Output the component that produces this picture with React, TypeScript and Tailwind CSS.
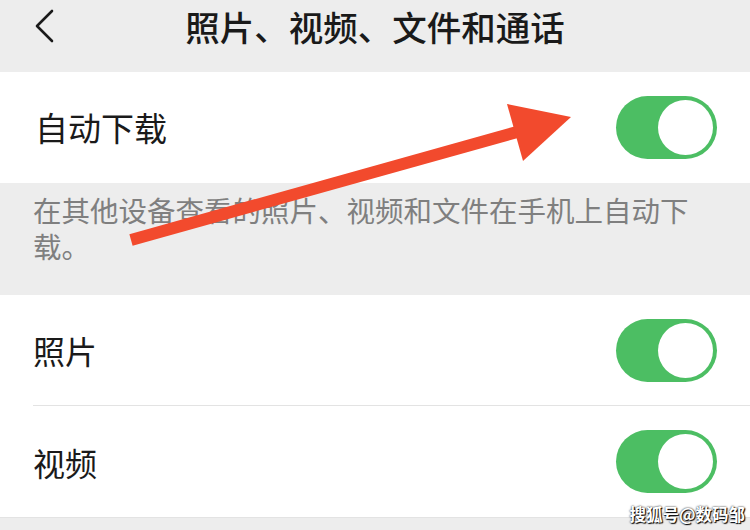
import React from "react";

function Toggle() {
  return (
    <div className="relative w-[101px] h-[63px] rounded-full bg-[#4cbe63] shrink-0">
      <div className="absolute right-[4px] top-[4px] w-[55px] h-[55px] rounded-full bg-white" />
    </div>
  );
}

export default function App() {
  const font = { fontFamily: '"Noto Sans CJK SC", "Noto Sans", sans-serif' };
  return (
    <div
      className="relative w-[750px] h-[530px] overflow-hidden bg-[#ededed] flex flex-col"
      style={font}
    >
      {/* Header */}
      <div className="h-[72px] flex items-start shrink-0">
        <div className="w-[110px] pl-[33px] pt-[9px]">
          <svg width="22" height="34" viewBox="0 0 22 34" fill="none">
            <path d="M19 2 L4 17 L19 32" stroke="#1a1a1a" strokeWidth="2.6" strokeLinecap="round" strokeLinejoin="round" />
          </svg>
        </div>
        <div className="flex-1 text-center text-[34.5px] leading-[40px] pt-[6px] font-medium text-[#1a1a1a]">
          照片、视频、文件和通话
        </div>
        <div className="w-[110px]" />
      </div>

      {/* Auto download */}
      <div className="h-[111px] bg-white flex items-center justify-between pl-[35px] pr-[33px] shrink-0">
        <span className="text-[33px] text-[#1a1a1a]">自动下载</span>
        <Toggle />
      </div>

      {/* Description */}
      <div className="h-[112px] px-[33px] pt-[9px] text-[28.5px] leading-[36px] text-[#7f7f7f] shrink-0">
        在其他设备查看的照片、视频和文件在手机上自动下载。
      </div>

      {/* Photos / Videos */}
      <div className="bg-white shrink-0">
        <div className="h-[110px] flex items-center justify-between pl-[33px] pr-[33px]">
          <span className="text-[32px] text-[#1a1a1a]">照片</span>
          <Toggle />
        </div>
        <div className="ml-[33px] h-px bg-[#e3e3e3]" />
        <div className="h-[111px] flex items-center justify-between pl-[33px] pr-[33px]">
          <span className="text-[32px] text-[#1a1a1a]">视频</span>
          <Toggle />
        </div>
      </div>
      <div className="flex-1 border-t border-[#e3e3e3]" />

      {/* Red arrow annotation */}
      <svg className="absolute left-0 top-0 pointer-events-none" width="750" height="530">
        <line x1="131" y1="240" x2="528" y2="129" stroke="#f24a2d" strokeWidth="12" />
        <polygon points="507,104 571,117 523,161" fill="#f24a2d" />
      </svg>

      {/* Watermark */}
      <div className="absolute right-[5px] bottom-[3px] text-[16.5px] font-bold text-white [text-shadow:0_0_2px_#000,1px_1px_1px_#000]">
        搜狐号@数码邹
      </div>
    </div>
  );
}
